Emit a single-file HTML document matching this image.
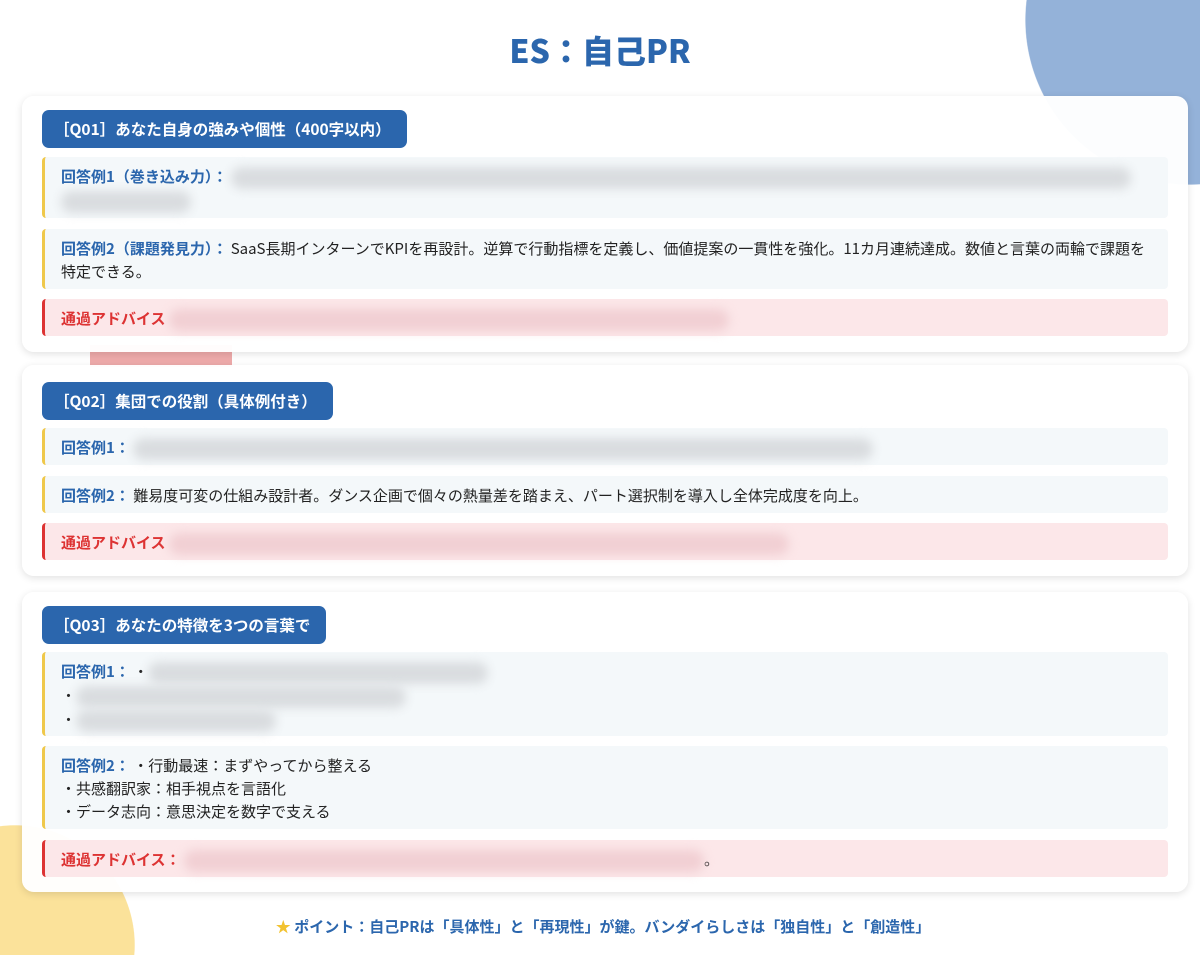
<!DOCTYPE html>
<html><head><meta charset="utf-8"><style>
*{margin:0;padding:0;box-sizing:border-box}
html,body{width:1200px;height:955px;overflow:hidden;background:#fff}
#w{position:relative;width:1200px;height:955px;overflow:hidden;font-family:"Noto Sans CJK JP","Liberation Sans",sans-serif;color:#222}
.c1{position:absolute;left:1025px;top:0;width:175px;height:185px;background:radial-gradient(circle 165px at 165px 20px,#94b2d9 99.5%,transparent 100%)}
.c2{position:absolute;left:0;top:825px;width:135px;height:130px;background:radial-gradient(circle 120px at 15px 120px,#fbe29a 99.5%,transparent 100%)}
.pink{position:absolute;left:90px;top:345px;width:142px;height:22px;background:#eeaaaa}
h1{position:absolute;top:26px;left:0;width:1200px;text-align:center;font-size:32px;line-height:48px;color:#2b66ad;font-weight:900}
.card{position:absolute;left:22px;width:1166px;background:rgba(255,255,255,.97);border-radius:12px;box-shadow:0 2px 8px rgba(0,0,0,.12)}
.pill{position:absolute;left:20px;height:38px;background:#2b66ad;color:#fff;font-weight:bold;font-size:15.5px;line-height:38px;padding:0 16px 0 12px;border-radius:7px}
.row{position:absolute;left:20px;width:1126px;background:#f4f8fa;border-left:3px solid #efc84a;border-radius:4px;padding:8px 16px;font-size:15px;line-height:23px}
.row b{color:#2b66ad}
.adv{background:#fce7e9;border-left-color:#d33}
.adv b{color:#d33}
.blur{display:inline-block;vertical-align:middle;height:22px;background:#d9dcdf;border-radius:11px;filter:blur(5px)}
.blurp{background:#f1cfd3}
.foot{position:absolute;top:916px;left:0;width:1206px;text-align:center;font-size:15px;line-height:22px;font-weight:bold;color:#2b66ad}
</style></head><body><div id="w">
<div class="c1"></div><div class="c2"></div><div class="pink"></div>
<h1>ES：自己PR</h1>

<div class="card" style="top:96px;height:256px">
<div class="pill" style="top:14px">［Q01］あなた自身の強みや個性（400字以内）</div>
<div class="row" style="top:61px;height:61px"><b>回答例1（巻き込み力）：</b> <span class="blur" style="width:900px"></span><br><span class="blur" style="width:130px;margin-left:0"></span></div>
<div class="row" style="top:133px;height:60px"><b>回答例2（課題発見力）：</b> SaaS長期インターンでKPIを再設計。逆算で行動指標を定義し、価値提案の一貫性を強化。11カ月連続達成。数値と言葉の両輪で課題を特定できる。</div>
<div class="row adv" style="top:203px;height:37px"><b>通過アドバイス</b> <span class="blur blurp" style="width:560px"></span></div>
</div>

<div class="card" style="top:365px;height:211px">
<div class="pill" style="top:17px">［Q02］集団での役割（具体例付き）</div>
<div class="row" style="top:63px;height:37px"><b>回答例1：</b> <span class="blur" style="width:740px"></span></div>
<div class="row" style="top:111px;height:37px"><b>回答例2：</b> 難易度可変の仕組み設計者。ダンス企画で個々の熱量差を踏まえ、パート選択制を導入し全体完成度を向上。</div>
<div class="row adv" style="top:158px;height:37px"><b>通過アドバイス</b> <span class="blur blurp" style="width:620px"></span></div>
</div>

<div class="card" style="top:592px;height:300px">
<div class="pill" style="top:14px">［Q03］あなたの特徴を3つの言葉で</div>
<div class="row" style="top:60px;height:84px"><b>回答例1：</b> ・<span class="blur" style="width:340px"></span><br>・<span class="blur" style="width:330px"></span><br>・<span class="blur" style="width:200px"></span></div>
<div class="row" style="top:154px;height:83px"><b>回答例2：</b> ・行動最速：まずやってから整える<br>・共感翻訳家：相手視点を言語化<br>・データ志向：意思決定を数字で支える</div>
<div class="row adv" style="top:248px;height:37px"><b>通過アドバイス：</b> <span class="blur blurp" style="width:520px"></span>。</div>
</div>

<div class="foot"><span style="color:#f2c230">★</span> ポイント：自己PRは「具体性」と「再現性」が鍵。バンダイらしさは「独自性」と「創造性」</div>
</div></body></html>
